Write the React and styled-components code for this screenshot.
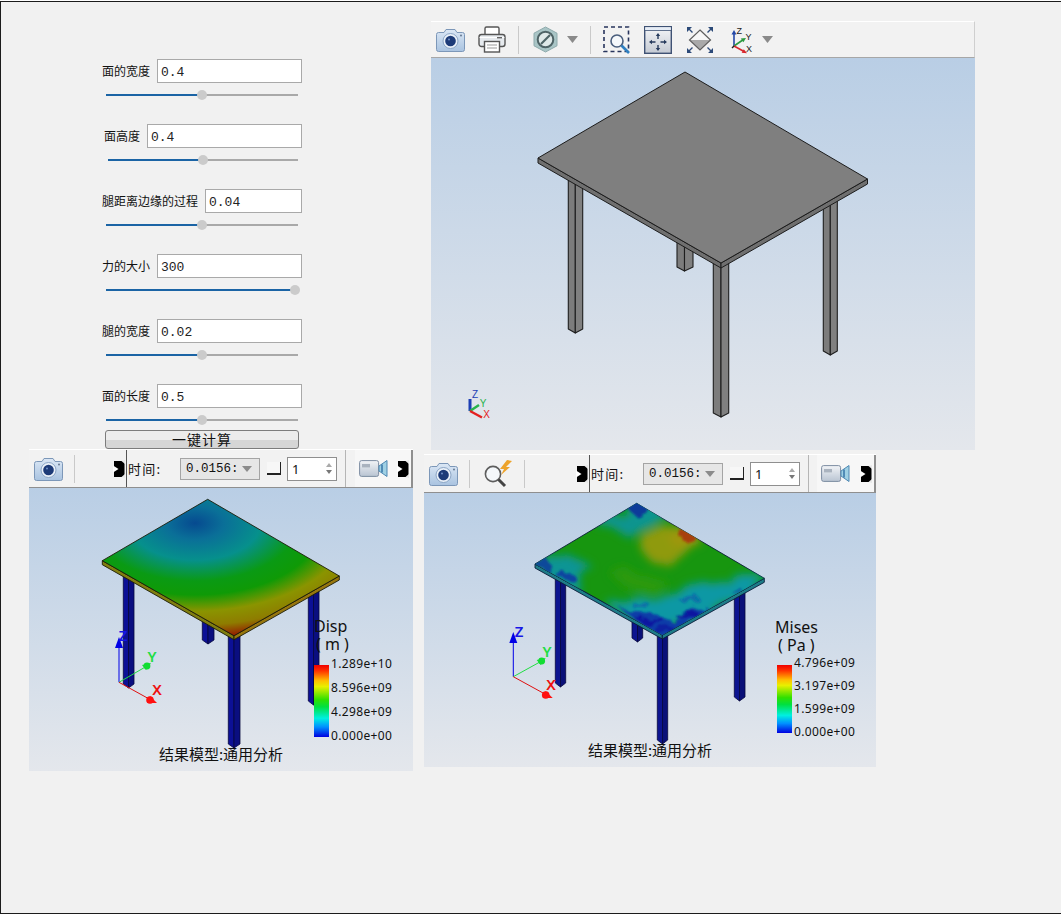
import React from "react";
import styled, { createGlobalStyle } from "styled-components";

const Global = createGlobalStyle`
  html, body { margin: 0; padding: 0; background: #fff; }
  * { box-sizing: border-box; }
`;
const SANS = `"Noto Sans", "Noto Sans CJK SC", sans-serif`;
const CJK = `"Noto Sans CJK SC", "Noto Sans", sans-serif`;
const MONO = `"Liberation Mono", "Noto Sans CJK SC", monospace`;

const Frame = styled.div`
  width: 1061px; height: 913px; margin-top: 1px;
  border: 1px solid #1c1c1c; border-right: none; background: #f1f1f1;
  display: flex; flex-direction: column; overflow: hidden;
  font-family: ${SANS}; color: #111;
`;
const TopRow = styled.div`display: flex; align-items: flex-start; height: 447px;`;
const Form = styled.div`width: 202px; margin: 57px 0 0 99px; display: flex; flex-direction: column;`;
const Group = styled.div`height: 65px; display: flex; flex-direction: column;`;
const FieldRow = styled.div`display: flex; justify-content: flex-end; align-items: center; gap: 7px; height: 24px;`;
const FieldLabel = styled.label`font: 12px/16px ${CJK}; white-space: nowrap;`;
const FieldValue = styled.div`
  width: ${p => p.$width}px; height: 24px; background: #fff; border: 1px solid #a9a9a9;
  padding: 1px 0 0 3px; font: 13px/23px ${MONO}; color: #222;
`;
const SliderTrack = styled.div`
  position: relative; height: 2px; margin: 11px 4px 0 ${p => p.$inset}px; background: #a9a9a9;
`;
const SliderFill = styled.div`height: 100%; background: #1b64a5;`;
const SliderKnob = styled.div`
  position: absolute; top: -4px; width: 10px; height: 10px; margin-left: -5px;
  border-radius: 50%; background: #cbcbcb;
`;
const RunButton = styled.button`
  width: 194px; height: 19px; margin: -19px 0 0 5px; padding: 0 0 2px;
  border: 1px solid #7c7c7c; border-radius: 3px;
  background: linear-gradient(#ececec 0 50%, #d6d6d6 50% 100%);
  font: 14px/14px ${CJK}; letter-spacing: 1px; color: #111;
`;

const Viewer = styled.section`
  width: 544px; height: 429px; margin: 19px 0 0 129px; display: flex; flex-direction: column;
`;
const TopBar = styled.div`
  height: 37px; flex: none; display: flex; align-items: center; padding-left: 5px;
  background: #f2f2f2; border-top: 1px solid #fff; border-bottom: 1px solid #a7a7a7; border-right: 1px solid #cfcfcf;
`;
const Tool = styled.span`display: inline-flex; flex: none; margin-left: ${p => p.$ml || 0}px;`;
const PushedTool = styled(Tool)`margin-left: auto;`;
const Sep = styled.span`flex: none; width: 1px; height: 28px; background: #c9c9c9; margin-left: ${p => p.$ml || 0}px;`;

const Scene = styled.div`
  position: relative; flex: 1; min-height: 0;
  background: linear-gradient(#b9cee5, #e4e7ec);
  svg { display: block; }
`;
const BottomRow = styled.div`display: flex; align-items: flex-start; padding-left: 28px; gap: 11px;`;
const ResultPanel = styled.section`
  width: ${p => p.$w}px; height: ${p => p.$h}px; margin-top: ${p => p.$top}px;
  display: flex; flex-direction: column;
`;
const ResultBar = styled.div`
  height: 39px; flex: none; display: flex; background: #f2f2f2;
  border-top: 1px solid #fff; border-bottom: 1px solid #8f8f8f;
`;
const ToolGroup = styled.div`
  width: ${p => p.$w}px; flex: none; display: flex; align-items: center; padding: 0 1px 0 5px;
`;
const TimeGroup = styled.div`
  width: ${p => p.$w}px; flex: none; display: flex; align-items: center; border-left: 1px solid #555;
`;
const TimeLabel = styled.span`width: 53px; flex: none; padding-left: 1px; font: 13px/18px ${CJK}; letter-spacing: 1.2px; white-space: nowrap;`;
const Combo = styled.div`
  width: 80px; height: 22px; flex: none; display: flex; align-items: center; justify-content: space-between;
  padding: 0 7px 0 5px; background: #e6e6e6; border: 1px solid #a4a4a4;
`;
const ComboText = styled.span`white-space: nowrap; font: 12.5px/20px ${MONO};`;
const Caret = styled.span`
  width: 0; height: 0; flex: none; border-left: 5px solid transparent; border-right: 5px solid transparent;
  border-top: 6px solid #8b8b8b;
`;
const StepSquare = styled.span`
  width: 14px; height: 13px; flex: none; margin-left: 7px;
  border-right: 1px solid #222; border-bottom: 2px solid #222; background: #f7f7f7;
`;
const Spin = styled.div`
  width: 50px; height: 24px; flex: none; margin-left: 6px; padding: 0 4px; background: #fff; border: 1px solid #8f8f8f;
  display: flex; align-items: center; justify-content: space-between; font: 13px/20px ${SANS};
`;
const SpinArrows = styled.span`display: flex; flex-direction: column; gap: 3px;`;
const SpinArrow = styled.span`
  width: 0; height: 0; border-left: 3px solid transparent; border-right: 3px solid transparent;
  ${p => p.$down ? "border-top: 4px solid #777;" : "border-bottom: 4px solid #aaa;"}
`;
const EndSep = styled.span`width: 1px; height: 100%; flex: none; margin-left: 8px; background: #b5b5b5;`;
const ClipGroup = styled.div`
  flex: 1; display: flex; align-items: center; justify-content: space-between;
  padding: 0 2px 0 4px; background: #f7f7f7; border-right: 2px solid #8f8f8f;
`;
const Legend = styled.div`position: absolute; left: ${p => p.$x}px; top: ${p => p.$y}px; width: 110px;`;
const LegendTitle = styled.div`font: 16px/18px ${SANS}; color: #111; margin-left: ${p => p.$ml}px; white-space: pre;`;
const LegendBody = styled.div`display: flex; gap: 2px; margin-top: ${p => p.$gap}px;`;
const LegendBar = styled.div`
  width: 15px; height: ${p => p.$h}px; flex: none;
  background: linear-gradient(#f00000 0, #ff3000 8%, #ffc000 22%, #e8f000 30%, #30e000 48%, #00e040 58%, #00f0e0 74%, #0090ff 86%, #0000e0 100%);
`;
const LegendScale = styled.div`
  height: ${p => p.$h}px; margin-top: ${p => p.$top}px; display: flex; flex-direction: column; justify-content: space-between;
  font: 12px/14px ${SANS}; letter-spacing: .35px; color: #111;
`;
const Caption = styled.div`
  position: absolute; left: 0; right: 0; bottom: 9px; text-align: center; font: 15px/16px ${CJK}; color: #111;
`;

/* ---------- icons ---------- */
const CameraIcon = () => (
  <svg width="29" height="24" viewBox="0 0 29 24">
    <defs><linearGradient id="camBody" x1="0" y1="0" x2="0" y2="1"><stop offset="0" stopColor="#dbe7f5" /><stop offset="1" stopColor="#a9c3e0" /></linearGradient></defs>
    <path d="M2.5 4.5H8L10 1.5H19L21 4.5H26.5A2 2 0 0 1 28.5 6.5V21.5A2 2 0 0 1 26.5 23.5H2.5A2 2 0 0 1 .5 21.5V6.5A2 2 0 0 1 2.5 4.5Z" fill="url(#camBody)" stroke="#7c97b8" />
    <circle cx="14.5" cy="13" r="7.5" fill="#eaf1f9" stroke="#8ba5c5" />
    <circle cx="14.5" cy="13" r="5.3" fill="#1d3b78" />
    <circle cx="13" cy="11.5" r="1" fill="#6f8fc4" />
    <circle cx="25" cy="7.5" r=".9" fill="#5b6f88" />
  </svg>
);
const PrinterIcon = () => (
  <svg width="28" height="27" viewBox="0 0 28 27" fill="none">
    <path d="M7 9V2.5A1.5 1.5 0 0 1 8.5 1H19.5A1.5 1.5 0 0 1 21 2.5V9" fill="#fff" stroke="#555" strokeWidth="1.4" />
    <rect x="1" y="8.5" width="26" height="12" rx="2.5" fill="#e6eaee" stroke="#555" strokeWidth="1.4" />
    <path d="M1.6 11.5H26.4" stroke="#fff" />
    <rect x="19" y="11" width="5" height="1.4" fill="#666" />
    <rect x="6.5" y="15.5" width="15" height="10.5" fill="#fff" stroke="#555" strokeWidth="1.4" />
    <path d="M9 19H19M9 22H19" stroke="#999" strokeWidth="1.2" />
  </svg>
);
const HexIcon = () => (
  <svg width="25" height="27" viewBox="0 0 25 27" fill="none">
    <path d="M12.5 1L24 7.2V19.8L12.5 26L1 19.8V7.2Z" fill="#a9c5c6" stroke="#8eaaac" />
    <circle cx="12.5" cy="13.5" r="7.8" fill="#dfe9e9" stroke="#4e6366" strokeWidth="2" />
    <path d="M8 18L17 9" stroke="#4e6366" strokeWidth="2.2" />
  </svg>
);
const CaretIcon = () => (
  <svg width="11" height="7" viewBox="0 0 11 7"><path d="M0 0H11L5.5 7Z" fill="#8a8a8a" /></svg>
);
const ZoomBoxIcon = () => (
  <svg width="27" height="28" viewBox="0 0 27 28" fill="none">
    <rect x="1" y="1" width="24.5" height="24.5" stroke="#27345c" strokeWidth="1.6" strokeDasharray="4 3" />
    <circle cx="14" cy="15" r="6" fill="#f5f8fb" stroke="#4a5e7d" strokeWidth="1.6" />
    <path d="M18.5 19.5L26 27" stroke="#2f7fc0" strokeWidth="2.6" />
  </svg>
);
const arrows4 = "M14 9V13M14 19V23M7 16H11.5M16.5 16H21";
const FitIcon = () => (
  <svg width="28" height="28" viewBox="0 0 28 28" fill="none">
    <defs><linearGradient id="fitBg" x1="0" y1="0" x2="0" y2="1"><stop offset="0" stopColor="#f5f6f8" /><stop offset="1" stopColor="#c4cad3" /></linearGradient></defs>
    <rect x=".7" y=".7" width="26.6" height="26.6" fill="url(#fitBg)" stroke="#3f5274" strokeWidth="1.4" />
    <path d="M1 4.5H27" stroke="#3f5274" /><rect x="1.2" y="1.2" width="25.6" height="3" fill="#e6edf6" />
    <path d={arrows4} stroke="#263a5c" strokeWidth="1.4" />
    <path d="M14 7L11.8 10H16.2ZM14 25L11.8 22H16.2ZM5 16L8 13.8V18.2ZM23 16L20 13.8V18.2Z" fill="#263a5c" />
  </svg>
);
const DiamondIcon = () => (
  <svg width="28" height="28" viewBox="0 0 28 28" fill="none">
    <path d="M14 4L24.5 14L14 24L3.5 14Z" fill="#f7f7f7" />
    <path d="M14 14L24.5 14L14 24L3.5 14Z" fill="#a9a9a9" />
    <path d="M14 4L24.5 14L14 24L3.5 14Z" stroke="#5f5f5f" strokeWidth="1.2" />
    <path d="M1 1L6 1L1 6ZM27 1L22 1L27 6ZM1 27L6 27L1 22ZM27 27L22 27L27 22Z" fill="#2c4a78" />
    <path d="M2 2L6.5 6.5M26 2L21.5 6.5M2 26L6.5 21.5M26 26L21.5 21.5" stroke="#2c4a78" strokeWidth="1.4" />
  </svg>
);
const AxisIcon = () => (
  <svg width="23" height="28" viewBox="0 0 23 28" fill="none">
    <path d="M4 20V7" stroke="#2447a8" strokeWidth="1.6" /><path d="M4 4L1.5 8.5H6.5Z" fill="#2447a8" />
    <path d="M4 20L13.5 13.5" stroke="#2c9a3f" strokeWidth="1.6" /><path d="M16 12L10.8 12.6L13.4 16.2Z" fill="#2c9a3f" />
    <path d="M4 20L15 26" stroke="#d8272c" strokeWidth="1.6" /><path d="M17 27.2L11.6 26.8L13.8 23.2Z" fill="#d8272c" />
    <path d="M4 20L2 22" stroke="#222" strokeWidth="1.4" />
    <text x="6.5" y="7.5" fontFamily="Liberation Sans, sans-serif" fontSize="9" fill="#222">Z</text>
    <text x="15.5" y="14" fontFamily="Liberation Sans, sans-serif" fontSize="9" fill="#222">Y</text>
    <text x="16" y="26" fontFamily="Liberation Sans, sans-serif" fontSize="9" fill="#222">X</text>
  </svg>
);
const ExpandIcon = () => (
  <svg width="12" height="18" viewBox="0 0 12 18">
    <defs><filter id="expBlur" x="-20%" y="-20%" width="140%" height="140%"><feGaussianBlur stdDeviation=".6" /></filter></defs>
    <g filter="url(#expBlur)">
      <rect x="1" y="1" width="10.5" height="16" fill="#050505" />
      <path d="M0 5.5L5.5 9L0 12.5Z" fill="#fff" />
      <path d="M12 0V4L8.5 1ZM12 18V14L8.5 17Z" fill="#e8e8e8" />
    </g>
  </svg>
);
const SearchBoltIcon = () => (
  <svg width="30" height="28" viewBox="0 0 30 28" fill="none">
    <circle cx="10" cy="14" r="7.6" fill="#f4f7fa" stroke="#5d5d5d" strokeWidth="1.6" />
    <path d="M15.5 19.5L22 26" stroke="#444" strokeWidth="3" />
    <path d="M24 0L17 9H21L18 15L27 7H23L29 1Z" fill="#eda32a" />
  </svg>
);
const VideoIcon = () => (
  <svg width="29" height="19" viewBox="0 0 29 19" fill="none">
    <defs><linearGradient id="vidBody" x1="0" y1="0" x2="0" y2="1"><stop offset="0" stopColor="#f2f4f7" /><stop offset="1" stopColor="#b9c4d2" /></linearGradient></defs>
    <rect x=".6" y="1.6" width="19" height="15.8" rx="2" fill="url(#vidBody)" stroke="#7d8da2" />
    <rect x="3" y="5" width="8" height="3.4" fill="#aab3bf" />
    <path d="M20 7L28 1.5V17.5L20 12Z" fill="#9fd0e4" stroke="#4e88b3" />
    <path d="M23 5.5V13.5" stroke="#2f6ea3" strokeWidth="1.4" />
  </svg>
);

/* ---------- 3D drawings ---------- */
const Leg = ({ l, fill, side, stroke, sw }) => (
  <g stroke={stroke} strokeWidth={sw} strokeLinejoin="round">
    <path d={`M${l[0]} ${l[3]}H${l[1]}V${l[4] + 4}L${l[0]} ${l[4]}Z`} fill={fill} />
    <path d={`M${l[1]} ${l[3]}H${l[2]}V${l[4]}L${l[1]} ${l[4] + 4}Z`} fill={side} />
  </g>
);
const pt = p => p.join(",");
const Slab = ({ g, top, sideL, sideR, stroke, sw }) => {
  const d = g.th;
  const lo = p => [p[0], p[1] + d];
  return (
    <g stroke={stroke} strokeWidth={sw} strokeLinejoin="round">
      <polygon points={[g.left, g.front, lo(g.front), lo(g.left)].map(pt).join(" ")} fill={sideL} />
      <polygon points={[g.front, g.right, lo(g.right), lo(g.front)].map(pt).join(" ")} fill={sideR} />
      <polygon points={[g.apex, g.right, g.front, g.left].map(pt).join(" ")} fill={top} />
    </g>
  );
};
const Triad = ({ o, z, y, x, lz, ly, lx }) => (
  <g fill="none" strokeWidth="1">
    <path d={`M${pt(o)}L${pt(z)}`} stroke="#0000e6" />
    <path d={`M${pt(o)}L${pt(y)}`} stroke="#22dd44" />
    <path d={`M${pt(o)}L${pt(x)}`} stroke="#e01010" />
    <path d={`M${z[0]} ${z[1] - 6}L${z[0] - 4} ${z[1] + 5}H${z[0] + 4}Z`} fill="#0000e6" stroke="none" />
    <circle cx={y[0]} cy={y[1]} r="3.4" fill="#12dd33" stroke="none" />
    <path d={`M${y[0] + 4} ${y[1] - 3}L${y[0] - 5} ${y[1] - 1}L${y[0] - 1} ${y[1] + 4}Z`} fill="#12dd33" stroke="none" />
    <circle cx={x[0] - 1} cy={x[1]} r="3.8" fill="#ff1010" stroke="none" />
    <path d={`M${x[0] + 6} ${x[1] + 3}L${x[0] - 1} ${x[1] - 4}L${x[0] - 4} ${x[1] + 3}Z`} fill="#ff1010" stroke="none" />
    <g fontFamily="Noto Sans, sans-serif" fontSize="15" fontWeight="600" stroke="none" textAnchor="middle">
      <text x={lz[0]} y={lz[1]} fill="#1616e6">Z</text>
      <text x={ly[0]} y={ly[1]} fill="#22dd44">Y</text>
      <text x={lx[0]} y={lx[1]} fill="#ee1010">X</text>
    </g>
  </g>
);

const MAIN = {
  apex: [685, 72], right: [867.5, 179], front: [721, 263], left: [538, 158], th: 5,
  legs: [[568.3, 575.3, 582.7, 170, 329], [677, 684.5, 693, 230, 267], [823.3, 830.3, 837.3, 190, 351], [713.3, 721, 728.7, 255, 413]],
};
const DISP = {
  apex: [207.7, 499.3], right: [339.3, 576], front: [234, 635.7], left: [102.3, 560.7], th: 4,
  legs: [[123.3, 128.5, 134, 570, 684], [202.3, 208, 214, 620, 640], [308.3, 313.5, 319, 590, 701], [228.3, 234, 240, 630, 744]],
};
const MISES = {
  apex: [636.7, 503.3], right: [764.3, 578.3], front: [662.3, 635], left: [535, 564], th: 4,
  legs: [[555.3, 560.5, 565.7, 570, 683], [632, 637.5, 642.7, 620, 638], [734.3, 739.5, 745, 590, 697], [657.3, 662.5, 667.7, 630, 740]],
};

const MainDrawing = () => (
  <svg width="544" height="392" viewBox="431 58 544 392">
    {MAIN.legs.map((l, i) => <Leg key={i} l={l} fill="#7c7c7c" side="#808080" stroke="#1e1e1e" sw="1.1" />)}
    <Slab g={MAIN} top="#7f7f7f" sideL="#6f6f6f" sideR="#6f6f6f" stroke="#1c1c1c" sw="1" />
    <g fill="none" strokeWidth="2.4">
      <path d="M470 411V399" stroke="#1d3fb5" strokeWidth="3" />
      <path d="M470 411L479 405" stroke="#27b34b" />
      <path d="M470 411L482 417.5" stroke="#e42020" />
    </g>
    <g fontFamily="Liberation Sans, sans-serif" fontSize="10" textAnchor="middle">
      <text x="475" y="398" fill="#1d3fb5">Z</text>
      <text x="483" y="407" fill="#27b34b">Y</text>
      <text x="486.5" y="418" fill="#e42020">X</text>
    </g>
  </svg>
);

const DispDrawing = () => (
  <svg width="384" height="283" viewBox="29 488 384 283">
    <defs>
      <radialGradient id="dispGrad" gradientUnits="userSpaceOnUse" cx="0" cy="0" r="1" gradientTransform="translate(195 523) scale(205 116)">
        <stop offset="0" stopColor="#064a90" />
        <stop offset=".14" stopColor="#0a6f98" />
        <stop offset=".32" stopColor="#06908c" />
        <stop offset=".5" stopColor="#0a9a14" />
        <stop offset=".62" stopColor="#0f9a06" />
        <stop offset=".76" stopColor="#8a9400" />
        <stop offset=".88" stopColor="#8e7c00" />
        <stop offset=".97" stopColor="#942a00" />
        <stop offset="1" stopColor="#a01800" />
      </radialGradient>
    </defs>
    {DISP.legs.map((l, i) => <Leg key={i} l={l} fill="#0c1096" side="#0a0e80" stroke="#06083e" sw=".8" />)}
    <Slab g={DISP} top="url(#dispGrad)" sideL="#807e10" sideR="#96760e" stroke="#1c1c08" sw=".9" />
    <Triad o={[119, 682.3]} z={[119, 643]} y={[147, 666]} x={[151, 700]} lz={[123, 641]} ly={[152, 662]} lx={[157, 695]} />
  </svg>
);

const MisesDrawing = () => (
  <svg width="452" height="274" viewBox="424 493 452 274">
    <defs>
      <clipPath id="misesClip"><polygon points={[MISES.apex, MISES.right, MISES.front, MISES.left].map(pt).join(" ")} /></clipPath>
      <filter id="mottle" filterUnits="userSpaceOnUse" x="510" y="480" width="280" height="180">
        <feTurbulence type="fractalNoise" baseFrequency=".07" numOctaves="3" seed="7" result="n" />
        <feDisplacementMap in="SourceGraphic" in2="n" scale="18" />
        <feGaussianBlur stdDeviation="1.2" />
      </filter>
      <filter id="soft" filterUnits="userSpaceOnUse" x="510" y="480" width="280" height="180">
        <feTurbulence type="fractalNoise" baseFrequency=".03" numOctaves="2" seed="3" result="n" />
        <feDisplacementMap in="SourceGraphic" in2="n" scale="26" />
        <feGaussianBlur stdDeviation="4.5" />
      </filter>
    </defs>
    {MISES.legs.map((l, i) => <Leg key={i} l={l} fill="#0c1490" side="#0a1078" stroke="#06083e" sw=".8" />)}
    <Slab g={MISES} top="#17960f" sideL="#1e7c88" sideR="#1e7c88" stroke="#0a1c3a" sw=".9" />
    <g clipPath="url(#misesClip)">
      <g filter="url(#soft)">
        <polygon points="530,566 560,548 592,566 576,592 548,582" fill="#0e9494" />
        <polygon points="596,524 640,495 668,512 630,538" fill="#0e9490" />
        <polygon points="606,604 660,640 772,580 745,570 705,586 650,596" fill="#0c98a4" />
        <ellipse cx="668" cy="545" rx="26" ry="21" fill="#8f9a08" />
        <ellipse cx="684" cy="538" rx="14" ry="9" fill="#a09608" />
        <ellipse cx="640" cy="580" rx="22" ry="9" fill="#2c9a08" />
      </g>
      <g filter="url(#mottle)">
        <polygon points="622,503 650,498 640,520" fill="#0a3a9a" />
        <polygon points="530,562 546,552 550,572" fill="#0a4a9a" />
        <ellipse cx="566" cy="576" rx="8" ry="4.5" fill="#0c44a0" />
        <polygon points="622,610 650,612 672,622 705,606 712,612 664,642" fill="#0a3ea8" />
        <ellipse cx="650" cy="620" rx="14" ry="3" fill="#0818a0" />
        <ellipse cx="690" cy="616" rx="14" ry="3" fill="#0818a0" />
        <ellipse cx="664" cy="630" rx="12" ry="4" fill="#0820a0" />
        <ellipse cx="640" cy="604" rx="10" ry="2" fill="#0a70a8" />
        <ellipse cx="690" cy="600" rx="12" ry="2" fill="#0a70a8" />
        <ellipse cx="738" cy="592" rx="6" ry="3" fill="#0a60a0" />
        <ellipse cx="689" cy="538" rx="7" ry="4.5" fill="#a84010" />
      </g>
    </g>
    <Triad o={[513.3, 676.7]} z={[513.3, 638]} y={[541.7, 661]} x={[546.7, 695]} lz={[519, 637]} ly={[547, 657]} lx={[551, 690]} />
  </svg>
);

/* ---------- parts ---------- */
const FIELDS = [
  { label: "面的宽度", value: "0.4", width: 145, inset: 6, pct: 50 },
  { label: "面高度", value: "0.4", width: 155, inset: 8, pct: 50 },
  { label: "腿距离边缘的过程", value: "0.04", width: 97, inset: 6, pct: 50 },
  { label: "力的大小", value: "300", width: 145, inset: 6, pct: 98.4 },
  { label: "腿的宽度", value: "0.02", width: 145, inset: 6, pct: 50 },
  { label: "面的长度", value: "0.5", width: 145, inset: 6, pct: 50 },
];

const Field = ({ label, value, width, inset, pct }) => (
  <Group>
    <FieldRow>
      <FieldLabel>{label}</FieldLabel>
      <FieldValue $width={width}>{value}</FieldValue>
    </FieldRow>
    <SliderTrack $inset={inset}>
      <SliderFill style={{ width: `${pct}%` }} />
      <SliderKnob style={{ left: `${pct}%` }} />
    </SliderTrack>
  </Group>
);

const ResultToolbar = ({ first, time, children }) => (
  <ResultBar>
    <ToolGroup $w={first}>
      {children}
      <PushedTool><ExpandIcon /></PushedTool>
    </ToolGroup>
    <TimeGroup $w={time}>
      <TimeLabel>时间:</TimeLabel>
      <Combo><ComboText>0.0156:</ComboText><Caret /></Combo>
      <StepSquare />
      <Spin>1<SpinArrows><SpinArrow /><SpinArrow $down /></SpinArrows></Spin>
      <EndSep />
    </TimeGroup>
    <ClipGroup><VideoIcon /><ExpandIcon /></ClipGroup>
  </ResultBar>
);

const LegendBox = ({ x, y, titleMl, title, unit, unitMl, gap, bar, top, scale, values }) => (
  <Legend $x={x} $y={y}>
    <LegendTitle $ml={titleMl}>{title}</LegendTitle>
    <LegendTitle $ml={unitMl}>{unit}</LegendTitle>
    <LegendBody $gap={gap}>
      <LegendBar $h={bar} />
      <LegendScale $h={scale} $top={top}>{values.map(v => <span key={v}>{v}</span>)}</LegendScale>
    </LegendBody>
  </Legend>
);

export default function App() {
  return (
    <Frame>
      <Global />
      <TopRow>
        <Form>
          {FIELDS.map(f => <Field key={f.label} {...f} />)}
          <RunButton>一键计算</RunButton>
        </Form>
        <Viewer>
          <TopBar>
            <Tool><CameraIcon /></Tool>
            <Tool $ml={13}><PrinterIcon /></Tool>
            <Sep $ml={12} />
            <Tool $ml={14}><HexIcon /></Tool>
            <Tool $ml={9}><CaretIcon /></Tool>
            <Sep $ml={12} />
            <Tool $ml={12}><ZoomBoxIcon /></Tool>
            <Tool $ml={14}><FitIcon /></Tool>
            <Tool $ml={14}><DiamondIcon /></Tool>
            <Tool $ml={16}><AxisIcon /></Tool>
            <Tool $ml={9}><CaretIcon /></Tool>
          </TopBar>
          <Scene><MainDrawing /></Scene>
        </Viewer>
      </TopRow>
      <BottomRow>
        <ResultPanel $w={384} $h={322} $top={0}>
          <ResultToolbar first={97} time={229}>
            <Tool><CameraIcon /></Tool>
            <Sep $ml={11} />
          </ResultToolbar>
          <Scene>
            <DispDrawing />
            <LegendBox x={285} y={129} titleMl={0} title="Disp" unit="( m )" unitMl={2} gap={12} bar={72} top={-8} scale={86}
              values={["1.289e+10", "8.596e+09", "4.298e+09", "0.000e+00"]} />
            <Caption>结果模型:通用分析</Caption>
          </Scene>
        </ResultPanel>
        <ResultPanel $w={452} $h={313} $top={5}>
          <ResultToolbar first={165} time={228}>
            <Tool><CameraIcon /></Tool>
            <Sep $ml={11} />
            <Tool $ml={13}><SearchBoltIcon /></Tool>
            <Sep $ml={11} />
          </ResultToolbar>
          <Scene>
            <MisesDrawing />
            <LegendBox x={353} y={125} titleMl={-2} title="Mises" unit="( Pa )" unitMl={1} gap={11} bar={68} top={-9} scale={83}
              values={["4.796e+09", "3.197e+09", "1.599e+09", "0.000e+00"]} />
            <Caption>结果模型:通用分析</Caption>
          </Scene>
        </ResultPanel>
      </BottomRow>
    </Frame>
  );
}
